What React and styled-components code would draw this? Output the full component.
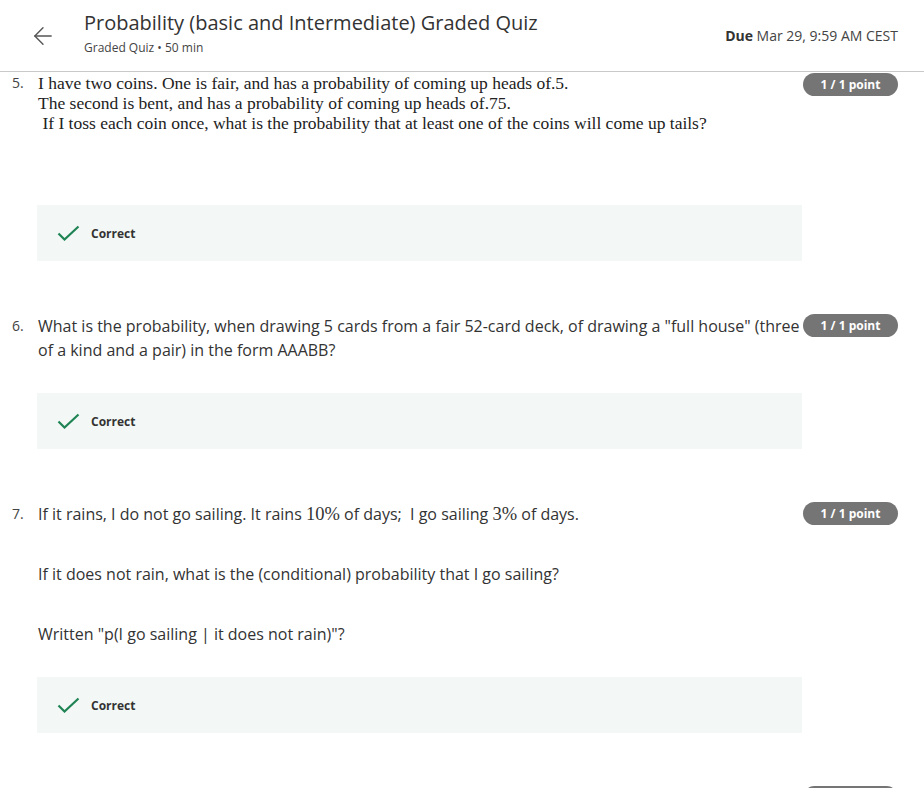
import React from 'react';
import styled, { createGlobalStyle } from 'styled-components';
import { ArrowLeft } from 'lucide-react';

const GlobalStyle = createGlobalStyle`
  body {
    margin: 0;
    background: #fff;
    font-family: "Open Sans", "Liberation Sans", sans-serif;
    color: #333;
  }
`;

const Header = styled.header`
  display: flex;
  align-items: center;
  height: 71px;
  border-bottom: 1px solid #c9c9c9;
  padding: 0 26px 0 28px;
`;

const BackButton = styled.button`
  display: flex;
  align-items: center;
  justify-content: center;
  width: 30px;
  height: 30px;
  padding: 0;
  margin-right: 26px;
  border: none;
  background: none;
  color: #555;
  cursor: pointer;
`;

const TitleBlock = styled.div`
  flex: 1;
  display: flex;
  flex-direction: column;
  margin-top: -6px;
`;

const Title = styled.h1`
  margin: 0;
  font-size: 20px;
  font-weight: 400;
  line-height: 26px;
  color: #333;
`;

const Subtitle = styled.div`
  font-size: 12px;
  line-height: 16px;
  margin-top: 4px;
  color: #444;
`;

const Due = styled.div`
  font-size: 14px;
  color: #444;
  b {
    font-weight: 700;
    color: #333;
  }
`;

const List = styled.main`
  display: flex;
  flex-direction: column;
  padding: 1px 26px 0 12px;
`;

const Question = styled.section`
  display: flex;
  align-items: flex-start;
  margin-bottom: 53px;
`;

const Num = styled.div`
  width: 26px;
  flex-shrink: 0;
  font-size: 14px;
  line-height: ${(p) => (p.serif ? '20px' : '24px')};
  color: #444;
`;

const Body = styled.div`
  width: 764px;
  flex-shrink: 0;
`;

const Prompt = styled.div`
  font-size: 16px;
  line-height: 24px;
  color: #333;
  margin-bottom: ${(p) => p.gap || 31}px;
  p {
    margin: 0 0 36px;
  }
  p:last-child {
    margin-bottom: 0;
  }
`;

const SerifText = styled.div`
  font-family: "Liberation Serif", "DejaVu Serif", serif;
  font-size: 17.5px;
  line-height: 20px;
  color: #222;
`;

const Math = styled.span`
  font-family: "Liberation Serif", "DejaVu Serif", serif;
  font-size: 18.5px;
`;

const Badge = styled.div`
  margin-left: 1px;
  width: 95px;
  height: 23px;
  flex-shrink: 0;
  border-radius: 12px;
  background: #757575;
  color: #fff;
  font-size: 12px;
  font-weight: 700;
  display: flex;
  align-items: center;
  justify-content: center;
`;

const Feedback = styled.div`
  display: flex;
  align-items: center;
  height: 56px;
  margin-left: -1px;
  padding-left: 20px;
  background: #f3f8f6;
  font-size: 12px;
  font-weight: 700;
  color: #333;
`;

const CheckMark = styled.svg`
  margin-right: 11px;
  flex-shrink: 0;
`;

const Correct = () => (
  <Feedback>
    <CheckMark width="23" height="16" viewBox="0 0 23 16">
      <path d="M1.5 8.5 L7.5 14.5 L21.5 1.5" fill="none" stroke="#1f8354" strokeWidth="2.2" />
    </CheckMark>
    Correct
  </Feedback>
);

export default function App() {
  return (
    <>
      <GlobalStyle />
      <Header>
        <BackButton aria-label="Back">
          <ArrowLeft size={28} strokeWidth={1.2} />
        </BackButton>
        <TitleBlock>
          <Title>Probability (basic and Intermediate) Graded Quiz</Title>
          <Subtitle>Graded Quiz • 50 min</Subtitle>
        </TitleBlock>
        <Due>
          <b>Due</b> Mar 29, 9:59 AM CEST
        </Due>
      </Header>
      <List>
        <Question>
          <Num serif>5.</Num>
          <Body>
            <Prompt gap={72}>
              <SerifText>
                I have two coins. One is fair, and has a probability of coming up heads of.5.
                <br />
                The second is bent, and has a probability of coming up heads of.75.
                <br />
                &nbsp;If I toss each coin once, what is the probability that at least one of the coins will come up tails?
              </SerifText>
            </Prompt>
            <Correct />
          </Body>
          <Badge>1 / 1 point</Badge>
        </Question>
        <Question>
          <Num>6.</Num>
          <Body>
            <Prompt>
              What is the probability, when drawing 5 cards from a fair 52-card deck, of drawing a "full house" (three of a kind and a pair) in the form AAABB?
            </Prompt>
            <Correct />
          </Body>
          <Badge>1 / 1 point</Badge>
        </Question>
        <Question>
          <Num>7.</Num>
          <Body>
            <Prompt>
              <p>
                If it rains, I do not go sailing. It rains <Math>10%</Math> of days;&nbsp; I go sailing <Math>3%</Math> of days.
              </p>
              <p>If it does not rain, what is the (conditional) probability that I go sailing?</p>
              <p>Written "p(I go sailing | it does not rain)"?</p>
            </Prompt>
            <Correct />
          </Body>
          <Badge>1 / 1 point</Badge>
        </Question>
        <Question>
          <Num />
          <Body />
          <Badge>1 / 1 point</Badge>
        </Question>
      </List>
    </>
  );
}
